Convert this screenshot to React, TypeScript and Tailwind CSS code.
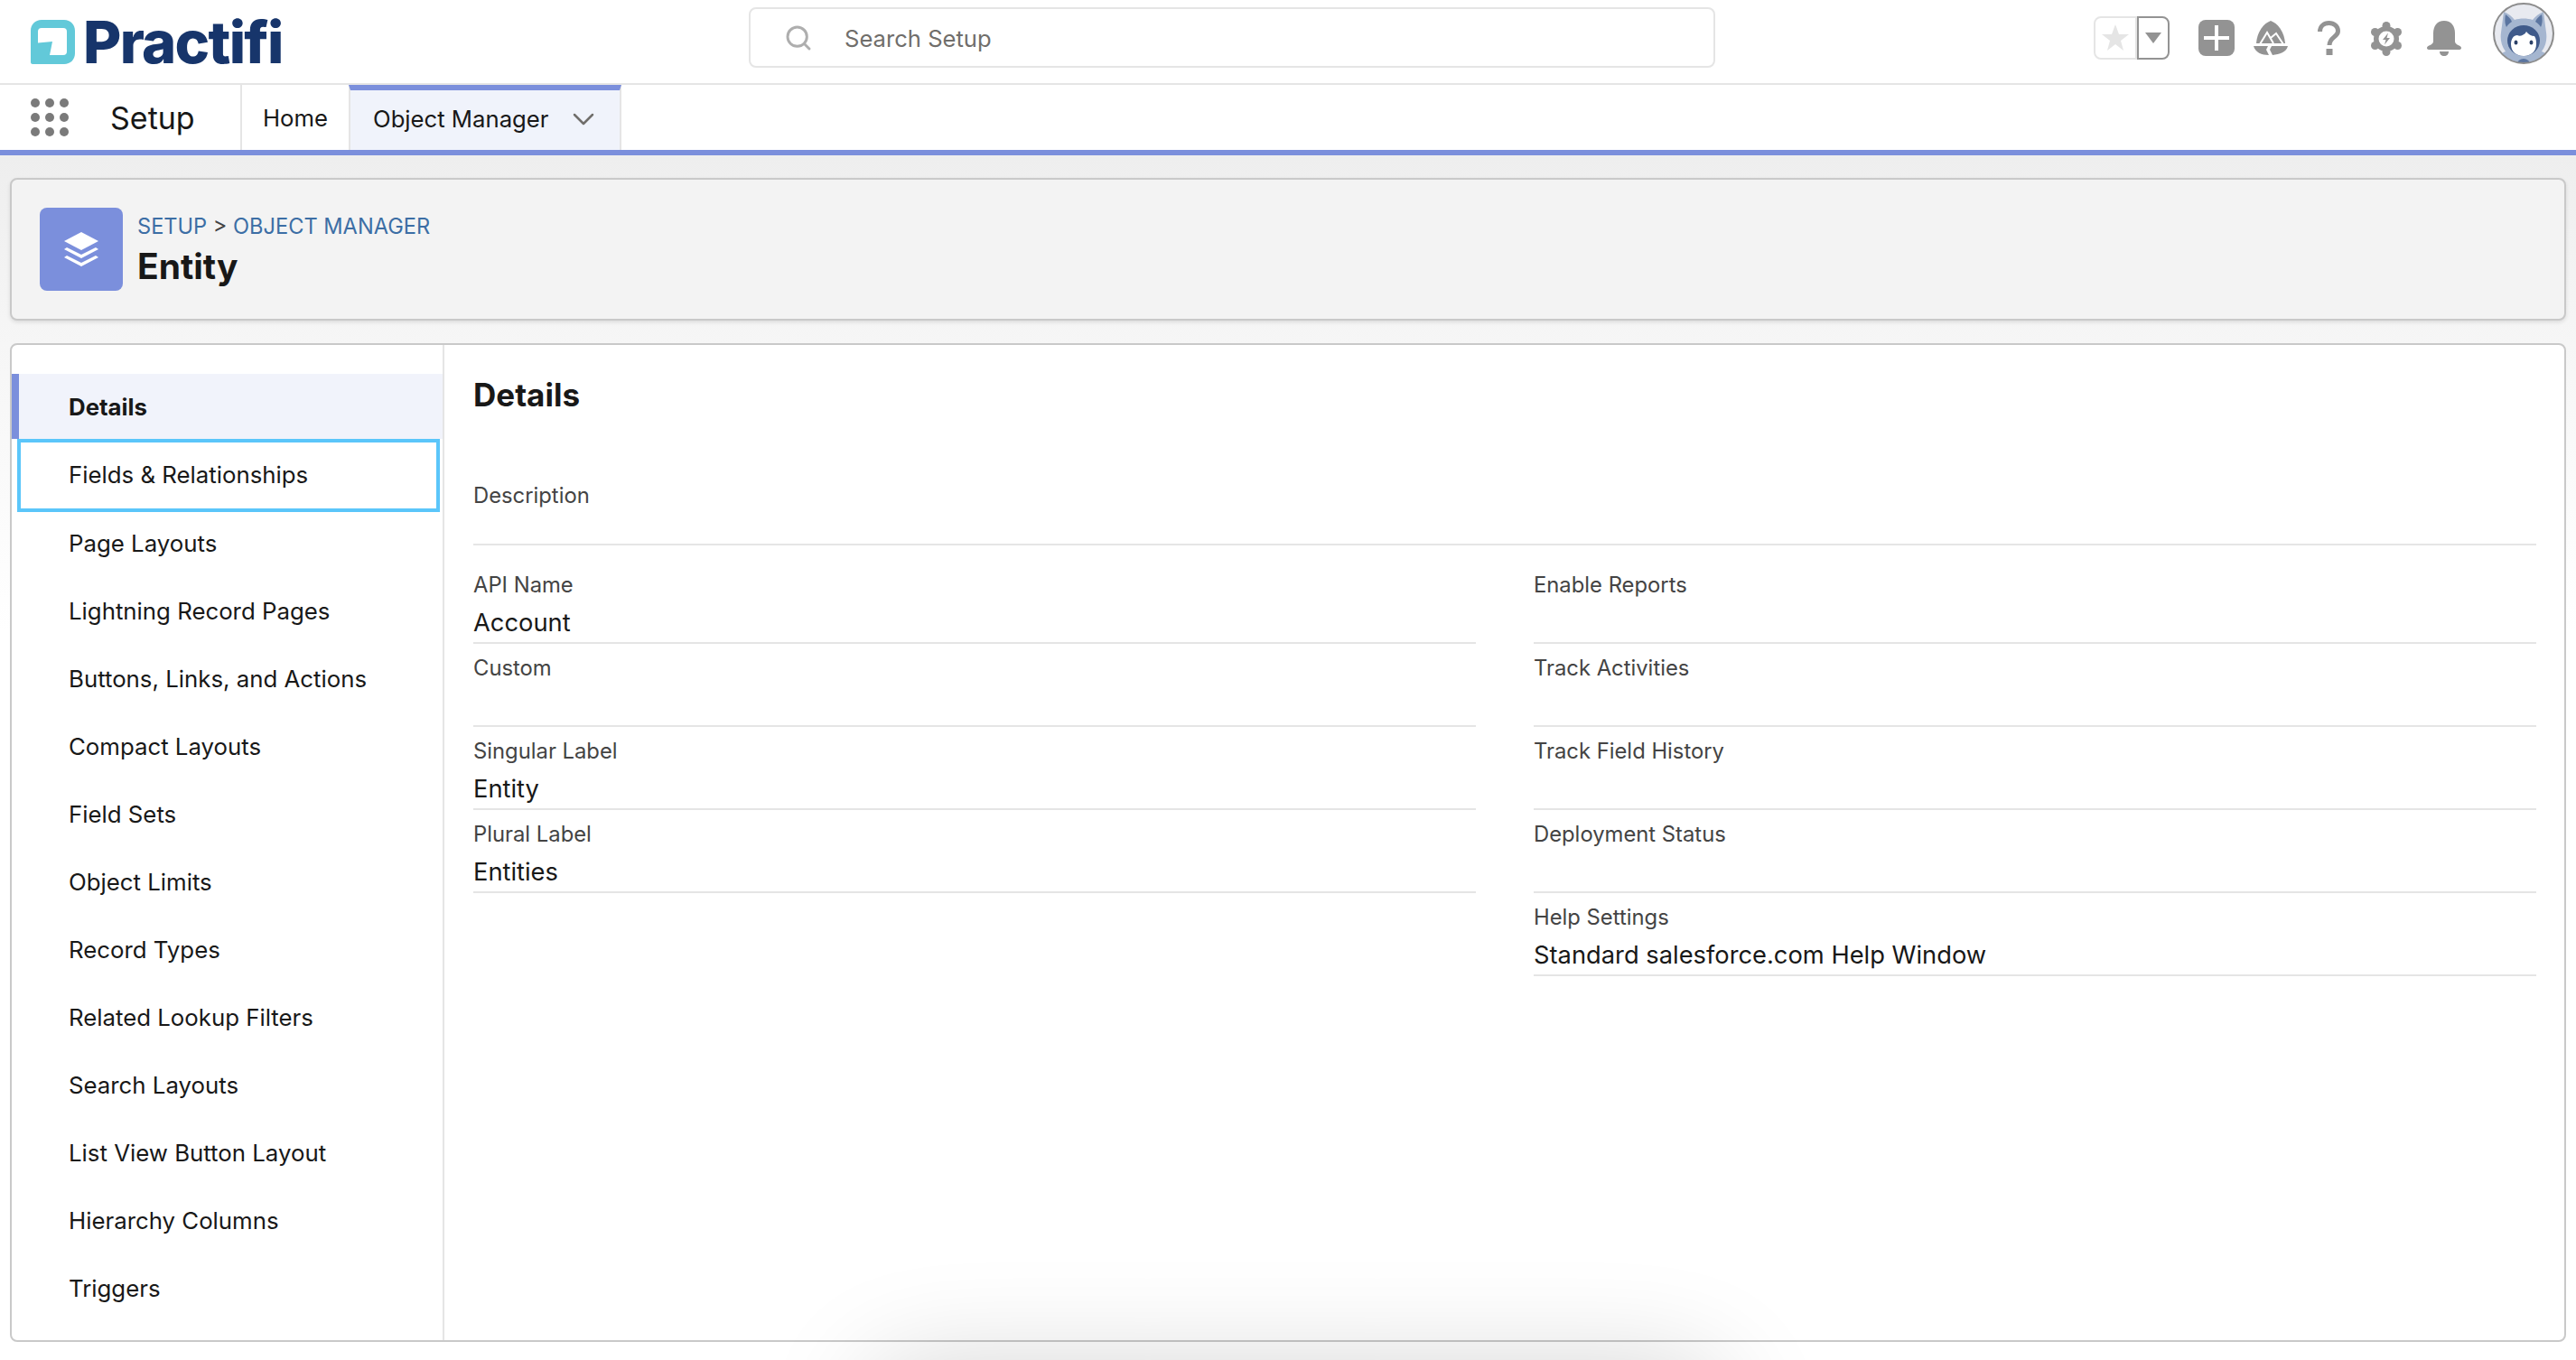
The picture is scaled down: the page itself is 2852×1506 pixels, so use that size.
import { ChevronDown, Search } from "lucide-react";

const navItems = [
  "Details",
  "Fields & Relationships",
  "Page Layouts",
  "Lightning Record Pages",
  "Buttons, Links, and Actions",
  "Compact Layouts",
  "Field Sets",
  "Object Limits",
  "Record Types",
  "Related Lookup Filters",
  "Search Layouts",
  "List View Button Layout",
  "Hierarchy Columns",
  "Triggers",
];

const leftFields = [
  { label: "API Name", value: "Account" },
  { label: "Custom", value: "" },
  { label: "Singular Label", value: "Entity" },
  { label: "Plural Label", value: "Entities" },
];

const rightFields = [
  { label: "Enable Reports", value: "" },
  { label: "Track Activities", value: "" },
  { label: "Track Field History", value: "" },
  { label: "Deployment Status", value: "" },
  { label: "Help Settings", value: "Standard salesforce.com Help Window" },
];

function Field({ label, value }: { label: string; value: string }) {
  return (
    <div className="h-[92px] border-b-2 border-[#e5e5e5] pt-[12px]">
      <div className="text-[23.8px] leading-[30px] text-[#444444]">{label}</div>
      {value && <div className="mt-[9px] text-[27.3px] leading-[36px] text-[#181818]">{value}</div>}
    </div>
  );
}

function PractifiMark() {
  return (
    <svg viewBox="0 0 49 49" className="h-[49px] w-[49px]">
      <path
        fill="#62c9d9"
        fillRule="evenodd"
        d="M12 0H37C44 0 49 5 49 12V37C49 44 44 49 37 49H2C1 49 0 48 0 47V12C0 5 5 0 12 0ZM12 9Q8 9 8 13V25.500L24 24L21 39H36Q40 39 40 35V13Q40 9 36 9Z"
      />
    </svg>
  );
}

function Avatar() {
  return (
    <svg viewBox="0 0 68 68" className="h-[68px] w-[68px]">
      <defs>
        <clipPath id="avatar-clip">
          <circle cx="34" cy="34" r="33" />
        </clipPath>
      </defs>
      <g clipPath="url(#avatar-clip)">
        <rect width="68" height="68" fill="#e8eaf0" />
        <path fill="#a5b6d0" d="M2 68C4 60 9 56 14 54C9 47 8 40 9 33L12 10C17 12 21 15 24 19C30 17 38 17 44 19C47 15 51 12 56 10L59 33C60 40 59 47 54 54C59 56 64 60 66 68Z" />
        <path fill="#5b75a0" d="M14 13C17 15 20 18 21 21C18 23 16 25 15 27C13 23 13 18 14 13ZM54 13C51 15 48 18 47 21C50 23 52 25 53 27C55 23 55 18 54 13Z" />
        <ellipse cx="34" cy="42" rx="18" ry="17" fill="#3f5a8a" />
        <path fill="#ffffff" d="M20 46C20 40 23 36 27 36C30 38 35 36 37 32C39 35 43 37 46 37C48 40 48 43 48 46C48 54 42 59 34 59C26 59 20 54 20 46Z" />
        <ellipse cx="25.500" cy="44" rx="2" ry="2.500" fill="#2c4168" />
        <ellipse cx="42.500" cy="44" rx="2" ry="2.500" fill="#2c4168" />
        <ellipse cx="34" cy="68" rx="7" ry="6" fill="#5b75a0" />
      </g>
      <circle cx="34" cy="34" r="33" fill="none" stroke="#8d8d8d" strokeWidth="2" />
    </svg>
  );
}

function TopBar() {
  return (
    <div className="relative flex h-[94px] items-center border-b-2 border-[#e5e5e5] bg-white">
      <div className="ml-[34px] flex items-center gap-[9px]">
        <PractifiMark />
        <span className="text-[65px] leading-[49px] font-extrabold tracking-[-1.7px] text-[#17356b]">Practifi</span>
      </div>
      <div className="absolute top-[8px] left-[829px] flex h-[67px] w-[1070px] items-center rounded-lg border-2 border-[#e5e5e5] pl-[37px]">
        <Search className="h-[32px] w-[32px] text-[#aeaeae]" strokeWidth={2.2} />
        <span className="ml-[35px] pt-[3px] text-[25.6px] text-[#706e6b]">Search Setup</span>
      </div>
      <div className="absolute top-0 left-[2318px] flex h-[92px]">
        <div className="mt-[18px] flex h-[48px] w-[48px] items-center justify-center rounded-l-lg border-2 border-[#e5e5e5]">
          <svg viewBox="0 0 30 30" className="h-[30px] w-[30px]">
            <path fill="#e5e5e5" d="M15 0L19 11H30L21 18L24 29L15 22L6 29L9 18L0 11H11Z" />
          </svg>
        </div>
        <div className="mt-[18px] flex h-[48px] w-[36px] items-center justify-center rounded-r-lg border-2 border-[#939393]">
          <svg viewBox="0 0 18 12" className="h-[12px] w-[18px]">
            <path fill="#939393" d="M0 0H18L9 12Z" />
          </svg>
        </div>
        <div className="mt-[22px] ml-[32px] flex h-[40px] w-[40px] items-center justify-center rounded-lg bg-[#939393]">
          <svg viewBox="0 0 28 28" className="h-[28px] w-[28px]">
            <path fill="#ffffff" d="M12 0H16V12H28V16H16V28H12V16H0V12H12Z" />
          </svg>
        </div>
        <svg viewBox="0 0 38 38" className="mt-[23px] ml-[21px] h-[38px] w-[38px]">
          <path fill="#939393" d="M19 0C27 3 34 12 35 25H3C4 12 11 3 19 0Z" />
          <path fill="none" stroke="#ffffff" strokeWidth="2" d="M7 26L15 13L22 25M19 19L25 14L33 26" />
          <path fill="#939393" d="M0 28H16L14 32L17 38C9 38 2 35 0 28ZM38 28H20L18 32L21 38C29 37 36 35 38 28Z" />
        </svg>
        <svg viewBox="0 0 25 38" className="mt-[23px] ml-[33px] h-[38px] w-[25px]">
          <path fill="none" stroke="#939393" strokeWidth="5" d="M2.500 12C2.500 6 7 2.500 12.500 2.500C18 2.500 22.500 6 22.500 11.500C22.500 18 13 18 13 27" />
          <rect x="9.500" y="31" width="7" height="7" fill="#939393" />
        </svg>
        <svg viewBox="0 0 34 38" className="mt-[24px] ml-[34px] h-[38px] w-[34px]">
          <circle cx="17" cy="19" r="14" fill="#939393" />
          <circle cx="17" cy="4.500" r="4.500" fill="#939393" />
          <circle cx="17" cy="33.500" r="4.500" fill="#939393" />
          <circle cx="4.500" cy="11.500" r="4.500" fill="#939393" />
          <circle cx="29.500" cy="11.500" r="4.500" fill="#939393" />
          <circle cx="4.500" cy="26.500" r="4.500" fill="#939393" />
          <circle cx="29.500" cy="26.500" r="4.500" fill="#939393" />
          <circle cx="17" cy="19" r="8.500" fill="#ffffff" />
          <path fill="#939393" d="M19 12.500L13 20H16.500L15 25.500L21 18H17.500Z" />
        </svg>
        <svg viewBox="0 0 38 39" className="mt-[23px] ml-[28px] h-[39px] w-[38px]">
          <path fill="#939393" d="M19 0C27 0 31 6 31 14V23C31 27 38 27 38 30C38 31.500 37 32 35 32H3C1 32 0 31.500 0 30C0 27 7 27 7 23V14C7 6 11 0 19 0Z" />
          <path fill="#939393" d="M14 34H24C24 37 22 39 19 39C16 39 14 37 14 34Z" />
        </svg>
        <div className="mt-[3px] ml-[35px]">
          <Avatar />
        </div>
      </div>
    </div>
  );
}

function NavBar() {
  return (
    <div className="flex h-[78px] border-b-[6px] border-[#7b8fdc] bg-white">
      <div className="flex w-[266px] items-center">
        <div className="ml-[34px] grid grid-cols-3 gap-x-[6px] gap-y-[6px]">
          {Array.from({ length: 9 }).map((_, i) => (
            <span key={i} className="h-[10px] w-[10px] rounded-full bg-[#7a7a7a]" />
          ))}
        </div>
        <span className="ml-[46px] pt-[1px] text-[34px] text-[#181818]">Setup</span>
      </div>
      <div className="flex w-[120px] items-center border-l-2 border-[#e5e5e5] pt-[3px] pl-[23px] text-[25.7px] text-[#181818]">Home</div>
      <div className="flex w-[302px] items-center border-t-[6px] border-r-2 border-l-2 border-t-[#7b8fdc] border-r-[#e5e5e5] border-l-[#e5e5e5] bg-[#f0f3fb] pb-[2px] pl-[25px] text-[25.7px] text-[#181818]">
        Object Manager
        <ChevronDown className="ml-[18px] h-[40px] w-[40px] text-[#706e6b]" strokeWidth={1.5} />
      </div>
    </div>
  );
}

function PageHeader() {
  return (
    <div className="mx-[11px] mt-[25px] flex h-[158px] items-center rounded-lg border-2 border-[#c9c9c9] bg-[#f3f3f3] pl-[31px] shadow-[0_2px_4px_rgba(0,0,0,0.1)]">
      <div className="flex h-[92px] w-[92px] items-center justify-center rounded-lg bg-[#7b8fdc]">
        <svg viewBox="0 0 38 38" className="h-[38px] w-[38px]">
          <path fill="#ffffff" d="M19 0L38 10L19 20L0 10Z" />
          <path fill="#ffffff" d="M3 17L19 25L35 17L38 19L19 29L0 19Z" />
          <path fill="#ffffff" d="M3 26L19 34L35 26L38 28L19 38L0 28Z" />
        </svg>
      </div>
      <div className="ml-[16px] pt-[1px]">
        <div className="text-[23.6px] leading-[32px] text-[#3c6ea5]">
          SETUP <span className="text-[#444444]">&gt;</span> OBJECT MANAGER
        </div>
        <div className="mt-[5px] text-[39px] leading-[46px] font-bold text-[#181818]">Entity</div>
      </div>
    </div>
  );
}

function Sidebar() {
  return (
    <div className="w-[479px] shrink-0 border-r-2 border-[#e5e5e5] pt-[32px]">
      {navItems.map((item, i) => {
        if (i === 0) {
          return (
            <div key={item} className="flex h-[72px] items-center border-l-[8px] border-[#7b8fdc] bg-[#f1f3fb] pt-[3px] pl-[55px] text-[25.8px] font-bold text-[#181818]">
              {item}
            </div>
          );
        }
        if (i === 1) {
          return (
            <div key={item} className="mr-[3px] ml-[6px] flex h-[81px] items-center border-[4px] border-[#5bc6fa] pl-[53px] text-[25.8px] text-[#181818]">
              {item}
            </div>
          );
        }
        return (
          <div key={item} className={`flex h-[75px] items-center pt-[1px] pl-[63px] text-[25.8px] text-[#181818] ${i === 2 ? "-mt-[3px]" : ""}`}>
            {item}
          </div>
        );
      })}
    </div>
  );
}

function DetailsPanel() {
  return (
    <div className="min-w-0 flex-1 pt-[33px] pr-[31px] pl-[32px]">
      <h2 className="text-[35px] leading-[44px] font-bold text-[#181818]">Details</h2>
      <div className="mt-[53px] h-[92px] border-b-2 border-[#e5e5e5] pt-[22px]">
        <div className="text-[23.8px] leading-[30px] text-[#444444]">Description</div>
      </div>
      <div className="mt-[17px] grid grid-cols-2 gap-x-[64px]">
        <div>
          {leftFields.map((f) => (
            <Field key={f.label} label={f.label} value={f.value} />
          ))}
        </div>
        <div>
          {rightFields.map((f) => (
            <Field key={f.label} label={f.label} value={f.value} />
          ))}
        </div>
      </div>
    </div>
  );
}

export default function App() {
  return (
    <div className="relative h-[1506px] overflow-hidden bg-[linear-gradient(#eeeeee_172px,#f6f6f6_380px,#ffffff_700px)] font-['Inter',sans-serif]">
      <TopBar />
      <NavBar />
      <PageHeader />
      <div className="mx-[11px] mt-[25px] flex h-[1106px] rounded-lg border-2 border-[#c9c9c9] bg-white">
        <Sidebar />
        <DetailsPanel />
      </div>
      {/* toast shadow coming up from below the fold */}
      <div className="pointer-events-none absolute top-[1556px] left-[1002px] h-[40px] w-[864px] rounded-full shadow-[0_0_120px_42px_rgba(0,0,0,0.18)]" />
    </div>
  );
}
